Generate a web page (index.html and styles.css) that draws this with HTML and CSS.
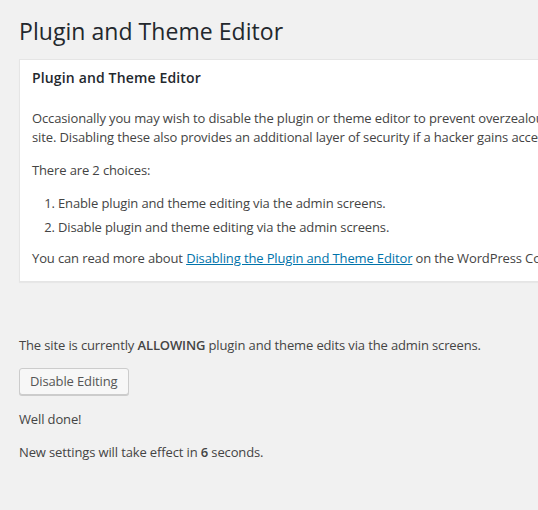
FILE: index.html
```html
<!DOCTYPE html>
<html>
<head>
<meta charset="utf-8">
<link rel="stylesheet" href="styles.css">
</head>
<body>
<div class="wrap">
  <h1 class="title">Plugin and Theme Editor</h1>
  <div class="postbox">
    <h3 class="hndle">Plugin and Theme Editor</h3>
    <div class="inside">
      <p>Occasionally you may wish to disable the plugin or theme editor to prevent overzealous users from being able to edit sensitive files and potentially crash the site. Disabling these also provides an additional layer of security if a hacker gains access to a well-privileged user account.</p>
      <p>There are 2 choices:</p>
      <ol>
        <li>Enable plugin and theme editing via the admin screens.</li>
        <li>Disable plugin and theme editing via the admin screens.</li>
      </ol>
      <p>You can read more about <a href="#">Disabling the Plugin and Theme Editor</a> on the WordPress Codex.</p>
    </div>
  </div>
  <div class="status">
    <p>The site is currently <strong>ALLOWING</strong> plugin and theme edits via the admin screens.</p>
    <button class="button" type="button">Disable Editing</button>
    <p>Well done!</p>
    <p class="note">New settings will take effect in <strong>6</strong> seconds.</p>
  </div>
</div>
</body>
</html>
```
FILE: styles.css
```css
html, body {
  margin: 0;
  padding: 0;
  background: #f1f1f1;
  overflow: hidden;
}
body {
  font-family: "Open Sans", sans-serif;
  font-size: 13px;
  letter-spacing: -0.13px;
  line-height: 1.4em;
  color: #444;
}
.wrap {
  padding: 0 0 0 19px;
  width: 962px;
}
.title {
  font-size: 23px;
  font-weight: 400;
  line-height: 29px;
  letter-spacing: 0.05px;
  margin: 0;
  padding: 17px 0 13px;
  color: #23282d;
}
.postbox {
  background: #fff;
  border: 1px solid #e5e5e5;
  box-shadow: 0 1px 1px rgba(0,0,0,0.04);
}
.hndle {
  font-size: 14px;
  font-weight: 600;
  letter-spacing: 0.15px;
  line-height: 1.4;
  margin: 0;
  padding: 8px 12px 9px;
  color: #23282d;
}
.inside {
  padding: 0 12px 12px;
}
.inside p {
  margin: 13px 0;
  line-height: 1.5;
}
.inside p:first-child {
  margin-top: 12px;
}
.inside p:last-child {
  margin-bottom: 0;
}
ol {
  margin: 14px 0 0 26px;
  padding: 0;
}
li {
  margin-bottom: 6px;
  line-height: 18px;
}
a {
  color: #0073aa;
}
.status {
  padding-top: 41px;
}
.status p {
  margin: 13px 0;
  line-height: 1.5;
}
.status .note {
  margin-top: 12px;
}
.status strong {
  font-weight: 600;
}
.button {
  font-family: "Open Sans", sans-serif;
  font-size: 13px;
  letter-spacing: -0.13px;
  line-height: 25px;
  height: 27px;
  margin: 0 0 2px;
  padding: 0 10px 1px;
  color: #555;
  background: #f7f7f7;
  border: 1px solid #ccc;
  border-radius: 3px;
  box-shadow: 0 1px 0 #ccc;
  display: inline-block;
  vertical-align: top;
}
```
